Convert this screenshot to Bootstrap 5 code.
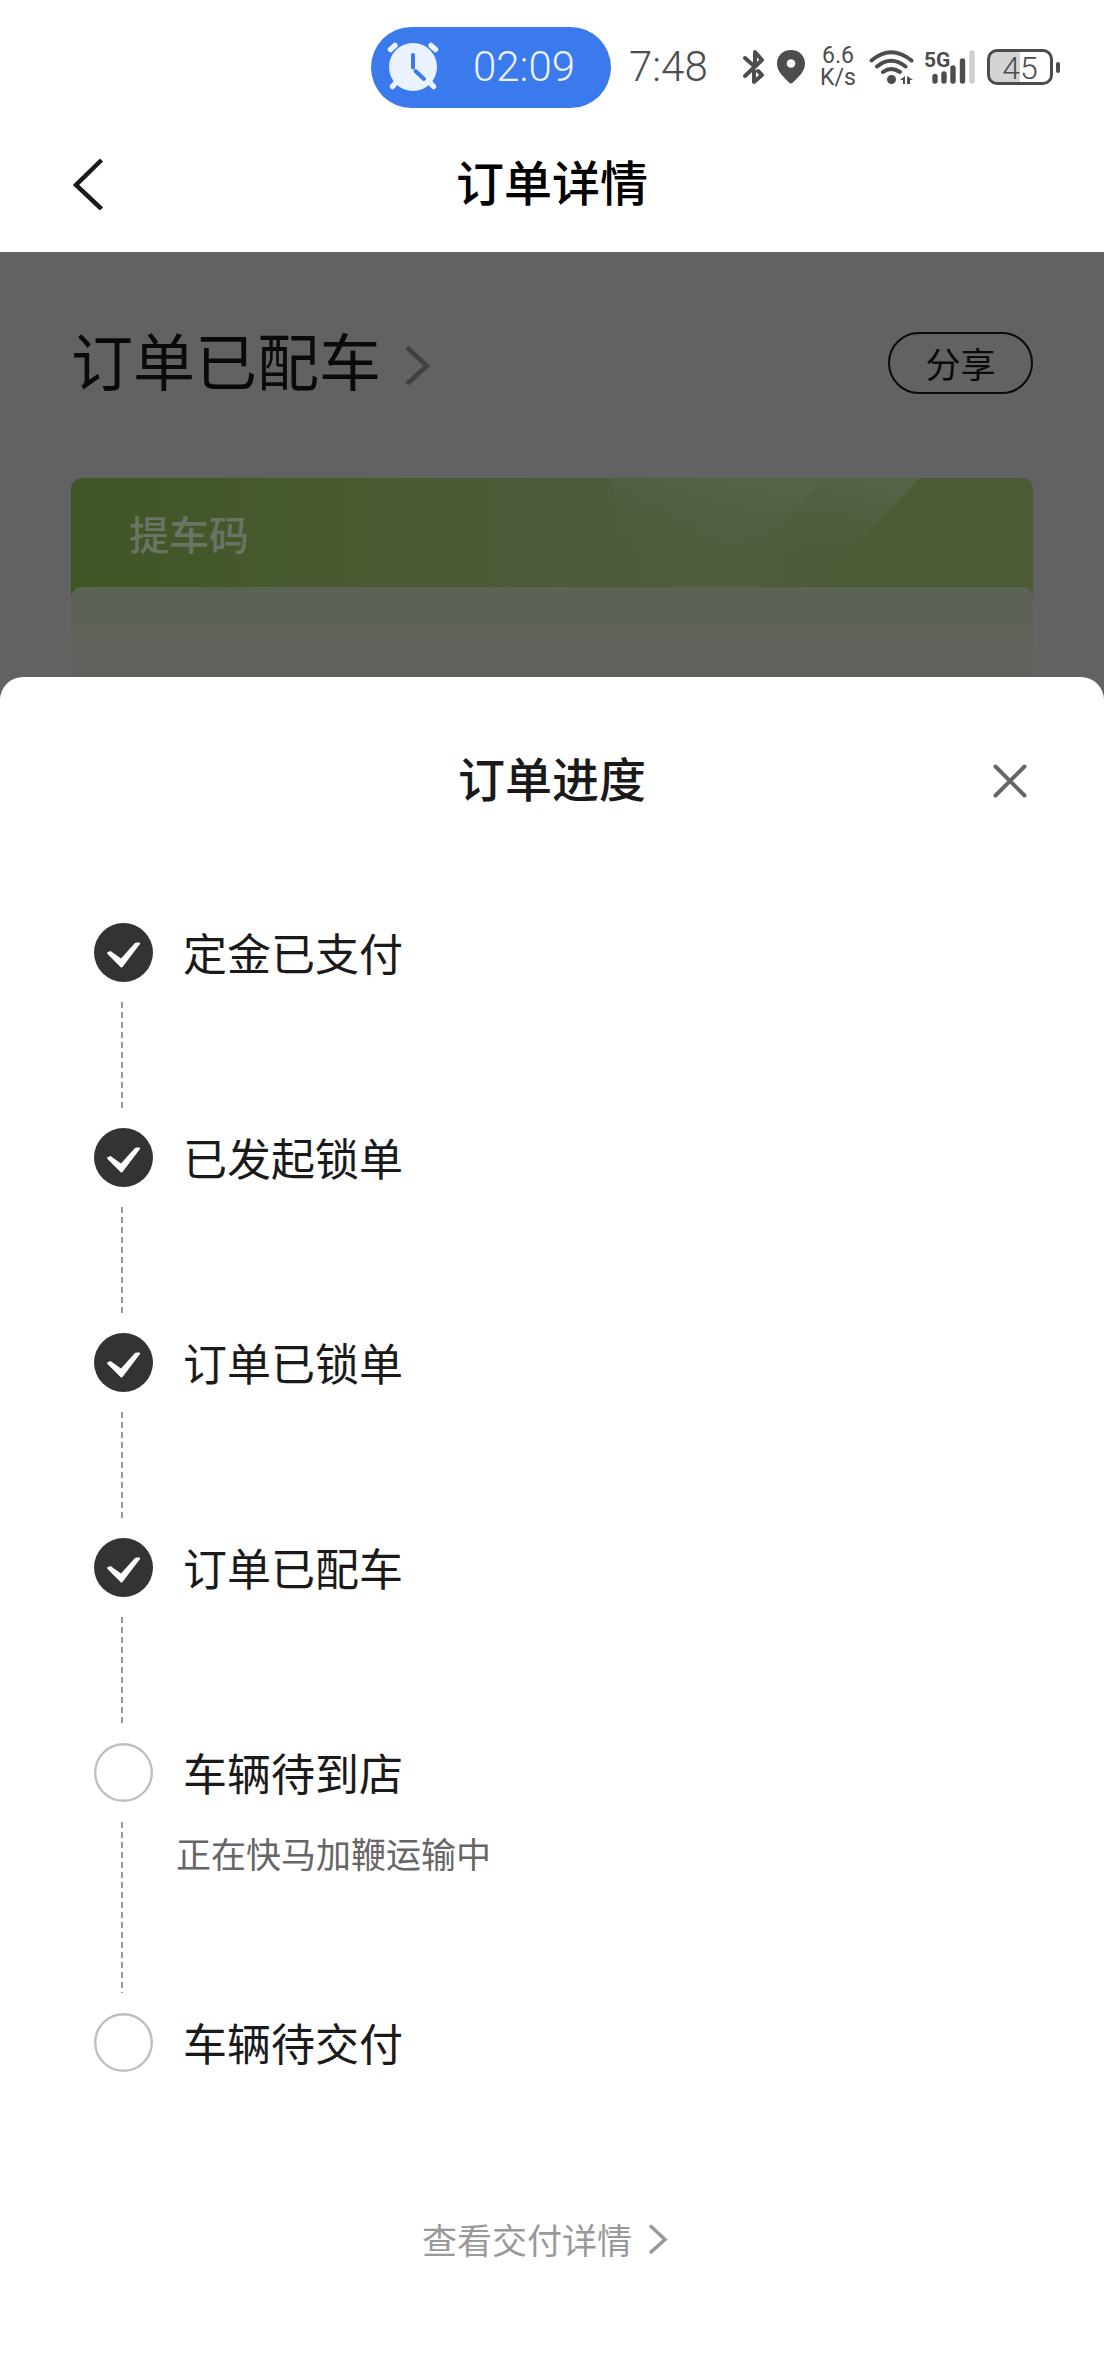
<!DOCTYPE html>
<html lang="zh-CN">
<head>
<meta charset="utf-8">
<meta name="viewport" content="width=device-width, initial-scale=1">
<title>订单详情</title>
<link href="https://cdn.jsdelivr.net/npm/bootstrap@5.3.0/dist/css/bootstrap.min.css" rel="stylesheet">
<style>
  body { font-family: "Noto Sans CJK SC", sans-serif; color: #1a1a1a; background: #fff; }
  svg { display: block; flex: none; }
  a { color: inherit; }

  /* system status bar */
  .status-bar { height: 134px; padding-right: 44px; color: #4d4d4d; }
  .alarm-pill { width: 240px; height: 81px; padding-left: 16px; gap: 34px; background: #3a7aec; color: #eaf1ff; border-radius: 41px; }
  .clock-text { font: 300 42px/50px Roboto, sans-serif; }
  .clock-now { width: 78px; margin: 0 36px 0 18px; }
  .net-speed { width: 36px; margin: 0 13px 0 11px; font: 400 23px/22px Roboto, sans-serif; }
  .battery { width: 66px; height: 36px; margin-left: 12px; border: 3px solid #4d4d4d; border-radius: 10px; background: linear-gradient(90deg, #d4d4d4 50%, #fff 50%); font: 300 32px/32px Roboto, sans-serif; }
  .battery-tip { width: 4px; height: 11px; margin-left: 3px; border-radius: 2px; background: #4d4d4d; }

  /* page title bar */
  .title-bar { height: 118px; padding: 0 72px 18px; color: #000; }
  .page-title { font-size: 48px; line-height: 64px; font-weight: 500; }
  .btn-icon { width: 60px; height: 60px; }
  .btn-back { left: 58px; }

  /* dimmed order page */
  .order-page { padding: 65px 71px 0; background: #626262; color: #0a0a0a; }
  .order-state { height: 92px; margin-bottom: 69px; }
  .state-name { font-size: 62px; line-height: 84px; gap: 24px; }
  .btn-share { width: 145px; height: 62px; border: 2px solid #0a0a0a; border-radius: 31px; color: #0a0a0a; font-size: 35px; line-height: 48px; }
  .code-card { border-radius: 11px; background: linear-gradient(90deg, #405525 0, #48592f 25%, #4c5b38 50%, #4f5e3d 68%, #4c5b36 80%, #4c5b36 100%); }
  .code-head { height: 109px; padding-left: 58px; font-size: 40px; line-height: 56px; font-weight: 500; color: #6c7365; }
  .code-body { height: 130px; border-radius: 11px 11px 0 0; background: linear-gradient(180deg, #5a6354 0, #5f625a 45%, #626262 100%); }

  /* progress sheet */
  .sheet { margin-top: -40px; border-radius: 23px 23px 0 0; }
  .sheet-head { height: 207px; }
  .sheet-close { right: 64px; }
  .sheet-title { font-size: 47px; line-height: 64px; font-weight: 500; }
  .steps { padding: 39px 94px 0; }
  .step { min-height: 205px; gap: 23px; }
  .step-long { min-height: 270px; }
  .step-last { min-height: 59px; }
  .step-rail { width: 59px; }
  .step-dot { width: 59px; height: 59px; }
  .step-line { width: 2px; margin: 20px 4px 20px 0; background: repeating-linear-gradient(180deg, #999 0 6px, transparent 6px 10px); }
  .step-name { padding-left: 7px; font-size: 44px; line-height: 58px; }
  .step-note { margin-top: 28px; font-size: 35px; line-height: 48px; color: #666; }
  .more-link { padding: 143px 14px 112px 0; font-size: 35px; line-height: 48px; gap: 16px; color: #999; }
</style>
<script src="https://cdn.jsdelivr.net/npm/bootstrap@5.3.0/dist/js/bootstrap.bundle.min.js"></script>
</head>
<body>
<svg width="0" height="0" class="position-absolute" aria-hidden="true">
  <symbol id="done" viewBox="0 0 59 59">
    <circle cx="29.500" cy="29.500" r="29.500" fill="#333"/>
    <path d="M13 29.500 16.500 28 27 35.500 40.500 20.500Q41.500 19.500 43 19.500H45.500Q46.500 20 46 21L28.500 44Q27.500 45 26.500 44L13.500 31Z" fill="#fff"/>
  </symbol>
  <symbol id="todo" viewBox="0 0 59 59">
    <circle cx="29.500" cy="29.500" r="28.300" fill="#fff" stroke="#bfbfbf" stroke-width="2.400"/>
  </symbol>
</svg>

<div class="status-bar d-flex align-items-center justify-content-end">
  <div class="alarm-pill d-flex align-items-center">
    <svg width="52" height="50" viewBox="0 0 52 50" aria-hidden="true">
      <g stroke="#eaf1ff" stroke-width="5.500" stroke-linecap="round">
        <path d="M3.500 7.500 8 3.500M48.500 7.500 44 3.500M9.500 40 5.500 44.500M42.500 40 46.500 44.500"/>
      </g>
      <circle cx="26" cy="25" r="24" fill="#eaf1ff"/>
      <path d="M26 13V25.500M28.500 29 37 37" stroke="#3a7aec" stroke-width="4" stroke-linecap="round" fill="none"/>
    </svg>
    <span class="clock-text">02:09</span>
  </div>
  <span class="clock-text clock-now text-center text-nowrap">7:48</span>
  <svg width="22" height="36" viewBox="0 0 22 36" fill="none" stroke="#4d4d4d" stroke-width="4" stroke-linecap="round" stroke-linejoin="round" aria-hidden="true">
    <path d="M2 9 11 17M2 27 19 11 12 3V15M11 22V33L19 26 15 22"/>
  </svg>
  <svg class="ms-2" width="36" height="36" viewBox="0 0 36 36" aria-hidden="true">
    <path d="M18 1C9.500 1 4 7 4 14.500 4 23 11 28 16 33.500Q18 35.500 20 33.500C25 28 32 23 32 14.500 32 7 26.500 1 18 1Z" fill="#4d4d4d"/>
    <circle cx="18" cy="14.500" r="4.300" fill="#fff"/>
  </svg>
  <div class="net-speed text-center">
    <div>6.6</div>
    <div>K/s</div>
  </div>
  <svg width="45" height="36" viewBox="0 0 45 36" aria-hidden="true">
    <g fill="none" stroke="#4d4d4d" stroke-width="4" stroke-linecap="round">
      <path d="M2.500 11.500Q22 -5 42.500 11.500M8 17.500Q22 6 36.500 17.500M14 23Q22 17 31 23"/>
    </g>
    <circle cx="22.500" cy="30.500" r="4.500" fill="#4d4d4d"/>
    <path d="M31 31 36 27V35H34V31ZM38 27 44 31H41V35H38Z" fill="#4d4d4d"/>
  </svg>
  <svg class="ms-2" width="53" height="36" viewBox="0 0 53 36" role="img" aria-label="5G">
    <text x="2" y="18" font-family="Roboto, sans-serif" font-weight="700" font-size="21" fill="#4d4d4d">5G</text>
    <g stroke-width="5.400" stroke-linecap="round" stroke="#4d4d4d">
      <path d="M13 27.500V32M22 25V32M31 19V32M40.500 12V32"/>
      <path d="M50 4V32" stroke="#cfcfcf"/>
    </g>
  </svg>
  <div class="battery text-center">45</div>
  <div class="battery-tip"></div>
</div>

<header class="title-bar position-relative d-flex align-items-center justify-content-center">
  <button type="button" class="btn btn-icon btn-back p-0 border-0 position-absolute d-flex align-items-center justify-content-center" aria-label="返回">
    <svg width="32" height="52" viewBox="0 0 32 52" fill="none" stroke="#1a1a1a" stroke-width="4.500" aria-hidden="true"><path d="M29.500 2 4 27 29.500 51"/></svg>
  </button>
  <h1 class="page-title m-0 pb-2">订单详情</h1>
</header>

<main>
  <section class="order-page">
    <div class="order-state d-flex align-items-center justify-content-between">
      <a href="#progress" class="state-name d-flex align-items-center text-decoration-none">
        <span class="pb-2">订单已配车</span>
        <svg class="mt-1" width="26" height="40" viewBox="0 0 26 40" fill="none" stroke="#404040" stroke-width="4.500" aria-hidden="true"><path d="M2 2.500 22 21 2 39"/></svg>
      </a>
      <button type="button" class="btn btn-share p-0">分享</button>
    </div>
    <div class="code-card overflow-hidden">
      <div class="code-head position-relative d-flex align-items-center">
        <svg class="position-absolute top-0 end-0" width="420" height="109" viewBox="0 0 420 109" aria-hidden="true">
          <defs>
            <linearGradient id="beam" x1="0.900" y1="0.100" x2="0.450" y2="0.900">
              <stop offset="0" stop-color="#586650" stop-opacity=".7"/>
              <stop offset="1" stop-color="#4f5e3d" stop-opacity="0"/>
            </linearGradient>
          </defs>
          <path d="M0 0H212L110 109H0Z" fill="url(#beam)"/>
          <path d="M212 0H307L205 109H110Z" fill="url(#beam)"/>
        </svg>
        <span class="position-relative">提车码</span>
      </div>
      <div class="code-body"></div>
    </div>
  </section>

  <section class="sheet position-relative bg-white" id="progress">
    <div class="sheet-head position-relative d-flex align-items-center justify-content-center">
      <h2 class="sheet-title m-0 pb-2">订单进度</h2>
      <button type="button" class="btn btn-icon sheet-close p-0 border-0 position-absolute d-flex align-items-center justify-content-center" aria-label="关闭">
        <svg width="34" height="34" viewBox="0 0 34 34" stroke="#666" stroke-width="4" stroke-linecap="round" aria-hidden="true"><path d="M2.500 2.500 31.500 31.500M31.500 2.500 2.500 31.500"/></svg>
      </button>
    </div>

    <ol class="steps list-unstyled m-0">
      <li class="step d-flex">
        <div class="step-rail d-flex flex-column align-items-center"><svg class="step-dot"><use href="#done"/></svg><div class="step-line flex-grow-1"></div></div>
        <div class="step-name">定金已支付</div>
      </li>
      <li class="step d-flex">
        <div class="step-rail d-flex flex-column align-items-center"><svg class="step-dot"><use href="#done"/></svg><div class="step-line flex-grow-1"></div></div>
        <div class="step-name">已发起锁单</div>
      </li>
      <li class="step d-flex">
        <div class="step-rail d-flex flex-column align-items-center"><svg class="step-dot"><use href="#done"/></svg><div class="step-line flex-grow-1"></div></div>
        <div class="step-name">订单已锁单</div>
      </li>
      <li class="step d-flex">
        <div class="step-rail d-flex flex-column align-items-center"><svg class="step-dot"><use href="#done"/></svg><div class="step-line flex-grow-1"></div></div>
        <div class="step-name">订单已配车</div>
      </li>
      <li class="step step-long d-flex">
        <div class="step-rail d-flex flex-column align-items-center"><svg class="step-dot"><use href="#todo"/></svg><div class="step-line flex-grow-1"></div></div>
        <div>
          <div class="step-name">车辆待到店</div>
          <div class="step-note">正在快马加鞭运输中</div>
        </div>
      </li>
      <li class="step step-last d-flex">
        <div class="step-rail"><svg class="step-dot"><use href="#todo"/></svg></div>
        <div class="step-name">车辆待交付</div>
      </li>
    </ol>

    <a href="#" class="more-link d-flex align-items-center justify-content-center text-decoration-none">查看交付详情
      <svg width="20" height="30" viewBox="0 0 20 30" fill="none" stroke="#999" stroke-width="3.500" aria-hidden="true"><path d="M2 1.500 17 15.500 2 29"/></svg>
    </a>
  </section>
</main>
</body>
</html>
